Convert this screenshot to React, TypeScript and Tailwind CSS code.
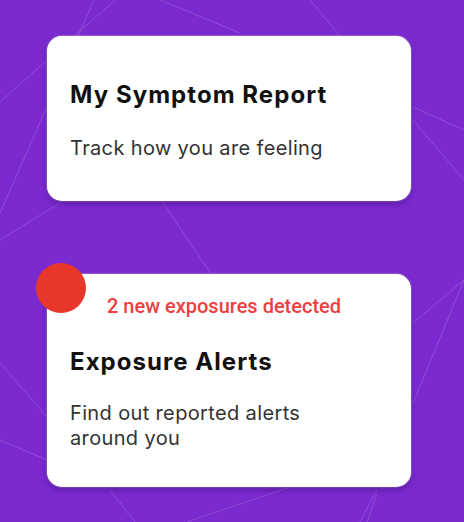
import React from 'react';

// faint network lines behind the cards
const lines: [number, number, number, number][] = [
  [94, 0, 0, 213],
  [115, 0, 0, 102],
  [160, 0, 240, 33],
  [310, 0, 340, 36],
  [60, 203, 0, 240],
  [163, 203, 212, 275],
  [413, 107, 464, 130],
  [413, 120, 464, 180],
  [0, 363, 47, 417],
  [0, 440, 47, 460],
  [110, 490, 135, 522],
  [187, 522, 287, 488],
  [367, 522, 377, 494],
  [464, 280, 413, 323],
  [464, 280, 413, 403],
  [377, 490, 360, 522],
];

const Background: React.FC = () => (
  <svg className="absolute inset-0 h-full w-full" viewBox="0 0 464 522" fill="none">
    {lines.map(([x1, y1, x2, y2], i) => (
      <line key={i} x1={x1} y1={y1} x2={x2} y2={y2} stroke="rgba(255,255,255,0.16)" strokeWidth="1" />
    ))}
  </svg>
);

export default function App() {
  return (
    <div
      className="relative h-[522px] w-[464px] overflow-hidden bg-[#7b2ad0]"
      style={{ fontFamily: 'Inter, "Noto Sans", sans-serif' }}
    >
      <Background />

      <div className="relative flex flex-col gap-[73px] pt-[36px] pl-[47px]">
        {/* Symptom report card */}
        <div className="h-[165px] w-[364px] rounded-[15px] bg-white px-[23px] pt-[44px] shadow-[0_3px_6px_rgba(40,0,90,0.4),0_0_2px_rgba(255,255,255,0.8)]">
          <h2 className="text-[24px] leading-[30px] font-bold tracking-[1.05px] text-[#111111]">My Symptom Report</h2>
          <p className="mt-[24px] text-[20px] leading-[28px] tracking-[0.36px] text-[#333333]">Track how you are feeling</p>
        </div>

        {/* Exposure alerts card */}
        <div className="relative h-[213px] w-[364px] rounded-[15px] bg-white px-[23px] pt-[20px] shadow-[0_3px_6px_rgba(40,0,90,0.4),0_0_2px_rgba(255,255,255,0.8)]">
          <span className="absolute -top-[11px] -left-[11px] h-[50px] w-[50px] rounded-full bg-[#e8372a]" />
          <p
            className="ml-[37px] text-[20px] leading-[24px] font-medium text-[#ee3f3f]"
            style={{ fontFamily: 'Roboto, sans-serif' }}
          >
            2 new exposures detected
          </p>
          <h2 className="mt-[29px] text-[24px] leading-[30px] font-bold tracking-[1.05px] text-[#111111]">Exposure Alerts</h2>
          <p className="mt-[24px] w-[270px] text-[20px] leading-[25px] tracking-[0.36px] text-[#333333]">
            Find out reported alerts around you
          </p>
        </div>
      </div>
    </div>
  );
}
